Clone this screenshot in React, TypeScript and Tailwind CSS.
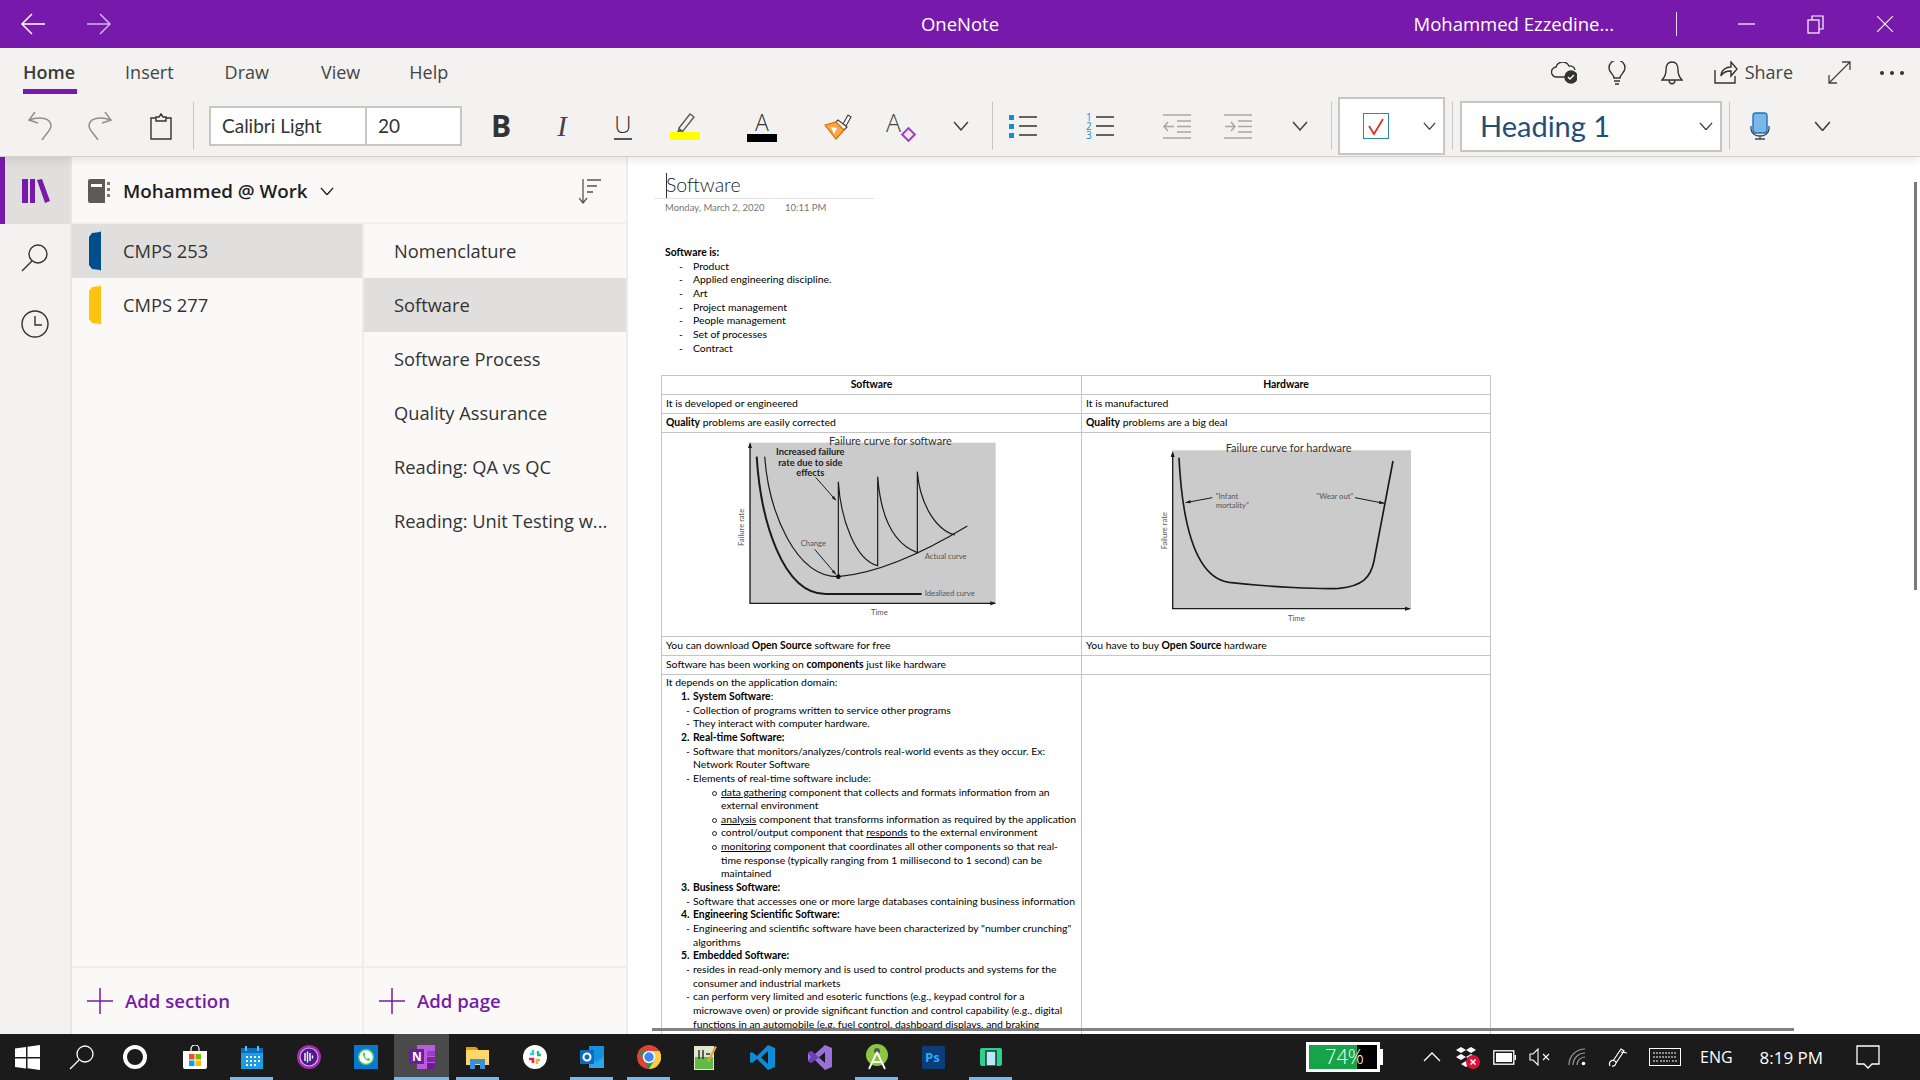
import type { ReactNode } from "react";

const ui = "[font-family:'Open_Sans',sans-serif]";
const note = "[font-family:Lato,sans-serif]";

// ── small line icons ──
function Chevron({ size = 16, color = "#444" }: { size?: number; color?: string }) {
  return (
    <svg width={size} height={size * 0.62} viewBox="0 0 16 10" fill="none" stroke={color} strokeWidth="1.6">
      <path d="M1 1l7 8 7-8" />
    </svg>
  );
}

function Undo({ flip = false }: { flip?: boolean }) {
  return (
    <svg width="26" height="28" viewBox="0 0 26 28" fill="none" stroke="#8f8f8f" strokeWidth="1.5" style={{ transform: flip ? "scaleX(-1)" : undefined }}>
      <path d="M8 0L2 8l9 3" />
      <path d="M2 8c11-4 22-2 22 6 0 4-6 9-9 14" />
    </svg>
  );
}

function ListIcon({ kind }: { kind: "bullet" | "number" }) {
  return (
    <svg width="30" height="26" viewBox="0 0 30 26" fill="none">
      <g stroke="#333" strokeWidth="1.5">
        <path d="M10 4h18M10 13h18M10 22h18" />
      </g>
      {kind === "bullet" ? (
        <g fill="#0e8fd8">
          <rect x="0" y="2" width="5" height="5" />
          <rect x="0" y="11" width="5" height="5" />
          <rect x="0" y="20" width="5" height="5" />
        </g>
      ) : (
        <g fill="#1a8ddb" fontSize="10" fontFamily="Open Sans, sans-serif">
          <text x="0" y="8">1</text>
          <text x="0" y="17">2</text>
          <text x="0" y="26">3</text>
        </g>
      )}
    </svg>
  );
}

function IndentIcon({ flip = false }: { flip?: boolean }) {
  return (
    <svg width="28" height="26" viewBox="0 0 28 26" fill="none" stroke="#a6a6a6" strokeWidth="1.5">
      <path d="M0 2h28M0 25h28M14 8h14M14 13.500h14M14 19h14" />
      {flip ? <path d="M1 13.500h10M7 9l4 4.500-4 4.500" /> : <path d="M11 13.500H1M5 9l-4 4.500 4 4.500" />}
    </svg>
  );
}

// Ribbon slot: fixed width cell which centres one tool
function Slot({ w, children }: { w: string; children: ReactNode }) {
  return <div className={`${w} flex h-full shrink-0 items-center justify-center`}>{children}</div>;
}

function Rule({ className }: { className: string }) {
  return <div className={`h-[48px] w-px shrink-0 bg-[#c8c6c4] ${className}`} />;
}

// ── title bar ──
function TitleBar() {
  return (
    <div className={`${ui} grid h-12 shrink-0 grid-cols-[1fr_auto_1fr] items-center bg-[#7719aa] text-white`}>
      <div className="flex items-center pl-[20px]">
        <svg width="26" height="24" viewBox="0 0 26 24" fill="none" stroke="#fff" strokeWidth="1.5">
          <path d="M25 12H2M12 2L2 12l10 10" />
        </svg>
        <svg className="ml-[40px]" width="26" height="24" viewBox="0 0 26 24" fill="none" stroke="#d3b3e3" strokeWidth="1.5">
          <path d="M1 12h23M14 2l10 10-10 10" />
        </svg>
      </div>
      <div className="text-[18.500px] leading-none">OneNote</div>
      <div className="flex items-center justify-end">
        <span className="text-[18.500px] leading-none">Mohammed Ezzedine...</span>
        <div className="ml-[62px] h-6 w-px bg-[#e6d5ee]" />
        <svg className="ml-[61px]" width="17" height="2" viewBox="0 0 17 2"><path d="M0 1h17" stroke="#fff" strokeWidth="1.2" /></svg>
        <svg className="ml-[52px]" width="17" height="19" viewBox="0 0 17 19" fill="none" stroke="#fff" strokeWidth="1.2">
          <rect x="1" y="5" width="11" height="13" />
          <path d="M5 5V1h11v13h-4" />
        </svg>
        <svg className="ml-[53px] mr-[27px]" width="16" height="16" viewBox="0 0 16 16" fill="none" stroke="#fff" strokeWidth="1.1">
          <path d="M0 0l16 16M16 0L0 16" />
        </svg>
      </div>
    </div>
  );
}

// ── ribbon ──
function TopTabs() {
  return (
    <div className={`${ui} flex h-12 items-center text-[#444] text-[18px]`}>
      <div className="relative ml-[23px] font-semibold text-[#3b3a39]">
        Home
        <div className="absolute left-0 top-[30px] h-[5px] w-[54px] bg-[#7719aa]" />
      </div>
      <span className="ml-[50px]">Insert</span>
      <span className="ml-[51px]">Draw</span>
      <span className="ml-[52px]">View</span>
      <span className="ml-[49px]">Help</span>
      <div className="ml-auto flex items-center pt-[1px]">
        <svg width="26" height="22" viewBox="0 0 26 22" fill="none" stroke="#333" strokeWidth="1.4">
          <path d="M17 15H6a5 5 0 0 1-1-10 7 7 0 0 1 13-1 5 5 0 0 1 6 4" />
          <circle cx="20" cy="15" r="6" fill="#333" />
          <path d="M17 15l2 2 4-4" stroke="#fff" />
        </svg>
        <svg className="ml-[31px]" width="18" height="24" viewBox="0 0 18 24" fill="none" stroke="#333" strokeWidth="1.4">
          <path d="M6 17c0-4-5-5-5-10a8 8 0 0 1 16 0c0 5-5 6-5 10zM6 20h6M7 23h4" />
        </svg>
        <svg className="ml-[35px]" width="22" height="24" viewBox="0 0 22 24" fill="none" stroke="#333" strokeWidth="1.4">
          <path d="M11 1c-5 0-6 4-6 8 0 5-1 7-4 10h20c-3-3-4-5-4-10 0-4-1-8-6-8zM8 19c0 5 6 5 6 0" />
        </svg>
        <svg className="ml-[31px]" width="24" height="23" viewBox="0 0 24 23" fill="none" stroke="#333" strokeWidth="1.4">
          <path d="M1 9v13h20v-7M7 15c0-6 5-9 10-9V1l6 7-6 7V10c-4 0-8 1-10 5z" />
        </svg>
        <span className="ml-[7px] text-[#444]">Share</span>
        <svg className="ml-[35px]" width="23" height="23" viewBox="0 0 23 23" fill="none" stroke="#444" strokeWidth="1.3">
          <path d="M1 22L22 1M14 1h8v8M1 14v8h8" />
        </svg>
        <div className="ml-[29px] mr-[16px] flex gap-[6px]">
          <div className="h-1 w-1 rounded-full bg-[#333]" />
          <div className="h-1 w-1 rounded-full bg-[#333]" />
          <div className="h-1 w-1 rounded-full bg-[#333]" />
        </div>
      </div>
    </div>
  );
}

function ToolRow() {
  return (
    <div className={`${ui} flex h-[60px] items-center pl-[10px]`}>
      <Slot w="w-[60px]"><Undo /></Slot>
      <Slot w="w-[60px]"><Undo flip /></Slot>
      <Slot w="w-[62px]">
        <svg width="24" height="27" viewBox="0 0 24 27" fill="none" stroke="#333" strokeWidth="1.4">
          <path d="M7 5H2v21h20V5h-5" />
          <path d="M7 8V4h3l2-3 2 3h3v4z" />
        </svg>
      </Slot>
      <Rule className="ml-px" />
      <div className="ml-[15px] flex h-[40px] w-[253px] shrink-0 border-2 border-[#c8c6c4] bg-white text-[#333] text-[19px]">
        <div className={`${note} flex w-[156px] items-center border-r-2 border-[#c8c6c4] pl-[11px]`}>Calibri Light</div>
        <div className={`${note} flex flex-1 items-center pl-[11px]`}>20</div>
      </div>
      <Slot w="w-[78px]"><span className="text-[30px] font-bold leading-none text-[#333]">B</span></Slot>
      <Slot w="w-[44px]"><span className="[font-family:'Liberation_Serif',serif] text-[29px] italic leading-none text-[#444]">I</span></Slot>
      <Slot w="w-[78px]">
        <div className="flex flex-col items-center">
          <span className="text-[24px] font-light leading-[24px] text-[#333]">U</span>
          <div className="mt-[2px] h-[2px] w-[18px] bg-[#555]" />
        </div>
      </Slot>
      <Slot w="w-[46px]">
        <svg width="30" height="28" viewBox="0 0 30 28" fill="none">
          <path d="M9 16L20 2l4 3-11 14-5 1z" stroke="#555" strokeWidth="1.3" />
          <path d="M9 16l-2 5h5l2-2z" fill="#666" />
          <rect x="0" y="20" width="30" height="8" fill="#ffff00" />
        </svg>
      </Slot>
      <Slot w="w-[108px]">
        <div className="flex w-[30px] flex-col items-center">
          <span className="text-[23px] font-light leading-[22px] text-[#333]">A</span>
          <div className="mt-[1px] h-[8px] w-[30px] bg-black" />
        </div>
      </Slot>
      <Slot w="w-[44px]">
        <svg width="28" height="28" viewBox="0 0 28 28" fill="none">
          <path d="M19 12l5-9 3 2-5 9z" fill="#fff" stroke="#444" strokeWidth="1.2" />
          <path d="M14 8l9 7-3 3-9-7z" fill="#fff" stroke="#444" strokeWidth="1.2" />
          <path d="M1 13l11-3 8 8-8 9z" fill="#f7a745" stroke="#d96f0b" strokeWidth="1.2" />
          <path d="M7 15l6 1-3 6z" fill="#fff" />
        </svg>
      </Slot>
      <Slot w="w-[80px]">
        <div className="relative h-[30px] w-[28px]">
          <span className="absolute left-0 top-[-3px] text-[25px] font-light leading-[28px] text-[#444]">A</span>
          <div className="absolute bottom-[1px] right-0 h-[11px] w-[11px] rotate-45 border-2 border-[#a23cc0] bg-[#f3e3f8]" />
        </div>
      </Slot>
      <Slot w="w-[42px]"><Chevron /></Slot>
      <Rule className="ml-[10px]" />
      <Slot w="w-[62px]"><ListIcon kind="bullet" /></Slot>
      <Slot w="w-[92px]"><ListIcon kind="number" /></Slot>
      <Slot w="w-[60px]"><IndentIcon /></Slot>
      <Slot w="w-[62px]"><IndentIcon flip /></Slot>
      <Slot w="w-[62px]"><Chevron /></Slot>
      <Rule className="" />
      <div className="ml-[6px] flex h-[58px] w-[107px] shrink-0 items-center border-2 border-[#c8c6c4] bg-white pl-[23px]">
        <svg width="26" height="26" viewBox="0 0 26 26" fill="none">
          <rect x="0.500" y="0.500" width="25" height="25" stroke="#2b88a8" />
          <path d="M6 13l5 8 9-15" stroke="#e0301e" strokeWidth="1.8" />
        </svg>
        <div className="ml-[34px]"><Chevron size={13} /></div>
      </div>
      <Rule className="ml-[7px]" />
      <div className={`${note} ml-[7px] flex h-[51px] w-[262px] shrink-0 items-center border-2 border-[#c8c6c4] bg-white pl-[18px] text-[29px] text-[#1f4e79]`}>
        Heading 1
        <div className="ml-auto mr-[7px]"><Chevron size={14} /></div>
      </div>
      <Rule className="ml-[7px]" />
      <Slot w="w-[60px]">
        <svg width="20" height="28" viewBox="0 0 20 28" fill="none">
          <rect x="3" y="1" width="14" height="20" rx="3" fill="#7db7e8" stroke="#1a73c7" strokeWidth="1.4" />
          <path d="M1 14v3a9 7 0 0 0 18 0v-3M10 24v3M5 27h10" stroke="#444" strokeWidth="1.3" />
        </svg>
      </Slot>
      <Slot w="w-[64px]"><Chevron size={17} /></Slot>
    </div>
  );
}

// ── left rail and lists ──
function SideRail() {
  return (
    <div className="flex w-[72px] shrink-0 flex-col items-center border-r-2 border-[#e8e6e4] bg-[#f3f2f1]">
      <div className="flex h-[67px] w-full items-center justify-center border-l-[5px] border-[#7719aa] bg-[#e1dfdd] pr-[4px]">
        <svg width="28" height="24" viewBox="0 0 28 24" fill="#7719aa">
          <rect x="0" y="0" width="6" height="24" />
          <rect x="8" y="0" width="5" height="24" />
          <path d="M15 1l5-1 8 22-5 2z" />
        </svg>
      </div>
      <svg className="mt-[20px]" width="28" height="28" viewBox="0 0 28 28" fill="none" stroke="#333" strokeWidth="1.4">
        <circle cx="17" cy="10" r="9" />
        <path d="M11 17L1 27" />
      </svg>
      <svg className="mt-[38px]" width="28" height="28" viewBox="0 0 28 28" fill="none" stroke="#333" strokeWidth="1.4">
        <circle cx="14" cy="14" r="13" />
        <path d="M14 6v9h7" />
      </svg>
    </div>
  );
}

function SectionTab({ color }: { color: string }) {
  return (
    <svg width="13" height="40" viewBox="0 0 13 40" fill={color}>
      <path d="M12 0v40l-1-1-8-1-3-4V6l3-4 8-1z" />
    </svg>
  );
}

const pages = ["Nomenclature", "Software", "Software Process", "Quality Assurance", "Reading: QA vs QC", "Reading: Unit Testing w..."];

function Panels() {
  return (
    <div className={`${ui} flex w-[556px] shrink-0 flex-col border-r-2 border-[#eeedeb] bg-[#faf9f8] text-[18.300px] text-[#333]`}>
      <div className="flex h-[67px] shrink-0 items-center border-b-2 border-[#f0efed] pl-[16px] pt-[3px]">
        <svg width="23" height="24" viewBox="0 0 23 24">
          <path d="M0 2a2 2 0 0 1 2-2h15v24H2a2 2 0 0 1-2-2z" fill="#5e5a56" />
          <rect x="3" y="5" width="11" height="3" fill="#fff" />
          <path d="M19 3h3v3h-3zM19 9h3v3h-3zM19 15h3v3h-3z" fill="#777" />
        </svg>
        <span className="ml-[12px] text-[18.800px] font-semibold text-[#201f1e]">Mohammed @ Work</span>
        <div className="ml-[12px]"><Chevron size={14} color="#222" /></div>
        <svg className="ml-auto mr-[25px]" width="22" height="26" viewBox="0 0 22 26" fill="none" stroke="#555" strokeWidth="1.3">
          <path d="M4 1v23M0 20l4 5 4-5M8 2h14M8 8h10M8 14h6" />
        </svg>
      </div>
      <div className="flex min-h-0 flex-1">
        <div className="flex w-[292px] shrink-0 flex-col border-r-2 border-[#eeedeb]">
          <div className="flex h-[54px] items-center bg-[#e1dfdd] pl-[17px]">
            <SectionTab color="#004e8c" />
            <span className="ml-[21px]">CMPS 253</span>
          </div>
          <div className="flex h-[54px] items-center pl-[17px]">
            <SectionTab color="#ffc20e" />
            <span className="ml-[21px]">CMPS 277</span>
          </div>
          <AddRow label="Add section" />
        </div>
        <div className="flex flex-1 flex-col">
          {pages.map((p) => (
            <div key={p} className={`flex h-[54px] shrink-0 items-center pl-[30px] ${p === "Software" ? "bg-[#e1dfdd]" : ""}`}>
              {p}
            </div>
          ))}
          <AddRow label="Add page" />
        </div>
      </div>
    </div>
  );
}

function AddRow({ label }: { label: string }) {
  return (
    <div className="mt-auto flex h-[68px] items-center border-t-2 border-[#eeedeb] pl-[15px] text-[18.600px] font-semibold text-[#7719aa]">
      <svg width="26" height="26" viewBox="0 0 26 26" stroke="#7719aa" strokeWidth="1.5">
        <path d="M13 0v26M0 13h26" />
      </svg>
      <span className="ml-[12px]">{label}</span>
    </div>
  );
}

// ── failure curve pictures: coordinates follow the pasted image ──
function SoftwareCurve() {
  return (
    <svg width="420" height="203" viewBox="39 39 1260 609" className="block" fontFamily="Lato, sans-serif">
      <rect x="303" y="68" width="737" height="482" fill="#cbcbcb" />
      <g fill="none" stroke="#1a1a1a">
        <path d="M303 72v478h735" strokeWidth="4" />
        <path d="M323 110c12 190 77 412 207 412h288" strokeWidth="6" />
        <path d="M347 110c13 170 93 360 221 360 112-10 252-70 387-152" strokeWidth="3.500" />
        <path d="M568 470V185c7 115 52 235 118 252V170c9 120 44 200 119 228V155c7 95 55 175 113 190" strokeWidth="3.500" />
        <path d="M497 388l63 74M500 172l60 68" strokeWidth="3" />
      </g>
      <path d="M303 66l-6 18h12zM1042 550l-18-6v12zM562 464l-14-8 7-6zM562 242l-14-8 7-6z" fill="#1a1a1a" />
      <circle cx="568" cy="470" r="7" fill="#111" />
      <text x="540" y="74" fontSize="33" fill="#333">Failure curve for software</text>
      <g fontSize="28" fontWeight="700" fill="#222" textAnchor="middle">
        <text x="484" y="105">Increased failure</text>
        <text x="484" y="137">rate due to side</text>
        <text x="484" y="168">effects</text>
      </g>
      <g fontSize="23" fill="#555">
        <text x="455" y="377">Change</text>
        <text x="827" y="418">Actual curve</text>
        <text x="827" y="529">Idealized curve</text>
        <text x="666" y="585">Time</text>
        <text transform="translate(286 378) rotate(-90)">Failure rate</text>
      </g>
    </svg>
  );
}

function HardwareCurve() {
  return (
    <svg width="407" height="201" viewBox="39 189 1221 603" className="block" fontFamily="Lato, sans-serif">
      <rect x="310" y="238" width="716" height="475" fill="#cbcbcb" />
      <g fill="none" stroke="#1a1a1a">
        <path d="M311 246v467h712" strokeWidth="4" />
        <path d="M330 260c10 200 50 360 150 374 120 14 280 21 330 18 70-7 95-32 105-82l57-300" strokeWidth="5" />
        <path d="M430 380l-80 15M858 380l87 17" strokeWidth="3" />
      </g>
      <path d="M311 240l-6 18h12zM1026 713l-18-6v12zM348 395l16-8 1 10zM947 397l-16-8-1 10z" fill="#1a1a1a" />
      <text x="470" y="244" fontSize="33" fill="#333">Failure curve for hardware</text>
      <g fontSize="23" fill="#555">
        <text x="440" y="384">"Infant</text>
        <text x="440" y="412">mortality"</text>
        <text x="742" y="385">"Wear out"</text>
        <text x="657" y="749">Time</text>
        <text transform="translate(294 535) rotate(-90)">Failure rate</text>
      </g>
    </svg>
  );
}

// ── note page ──
function Num({ n, children }: { n: number; children: ReactNode }) {
  return (
    <div className="relative ml-[27px] font-bold">
      <span className="absolute left-[-12px]">{n}.</span>
      {children}
    </div>
  );
}

function Dash({ children }: { children: ReactNode }) {
  return (
    <div className="relative ml-[27px]">
      <span className="absolute left-[-7px]">-</span>
      {children}
    </div>
  );
}

function Sub({ children }: { children: ReactNode }) {
  return (
    <div className="relative ml-[55px]">
      <span className="absolute left-[-9px] top-[5px] h-[5px] w-[5px] rounded-full border border-[#222]" />
      {children}
    </div>
  );
}

const tdClass = "h-[19px] border border-[#c4c4c4] px-[4px] align-middle";

function Note() {
  return (
    <div className={`${note} relative min-w-0 flex-1 overflow-hidden bg-white text-[10.400px] leading-[13.650px] text-black`}>
      <div className="ml-[27px] mt-[16px] w-[219px]">
        <div className="relative h-[26px] border-b border-[#e1dfdd] pl-[11px] text-[19.500px] font-light leading-[24px] text-[#222]">
          <div className="absolute left-[11px] top-0 h-[25px] w-px bg-[#333]" />
          Software
        </div>
        <div className="flex h-[18px] items-center pl-[10px] text-[9.500px] text-[#767676]">
          <span className="w-[120px]">Monday, March 2, 2020</span>
          <span>10:11 PM</span>
        </div>
      </div>
      <div className="ml-[37px] mt-[29px]">
        <div className="font-bold">Software is:</div>
        {["Product", "Applied engineering discipline.", "Art", "Project management", "People management", "Set of processes", "Contract"].map((t) => (
          <div key={t} className="flex">
            <span className="ml-[14px] w-[14px]">-</span>
            {t}
          </div>
        ))}
      </div>
      <table className="ml-[33px] mt-[20px] w-[829px] table-fixed border-collapse">
        <colgroup>
          <col className="w-[420px]" />
          <col className="w-[409px]" />
        </colgroup>
        <tbody>
          <tr>
            <td className={`${tdClass} text-center font-bold`}>Software</td>
            <td className={`${tdClass} text-center font-bold`}>Hardware</td>
          </tr>
          <tr>
            <td className={tdClass}>It is developed or engineered</td>
            <td className={tdClass}>It is manufactured</td>
          </tr>
          <tr>
            <td className={tdClass}><b>Quality</b> problems are easily corrected</td>
            <td className={tdClass}><b>Quality</b> problems are a big deal</td>
          </tr>
          <tr>
            <td className="h-[203px] border border-[#c4c4c4] p-0"><SoftwareCurve /></td>
            <td className="h-[203px] border border-[#c4c4c4] p-0"><HardwareCurve /></td>
          </tr>
          <tr>
            <td className={tdClass}>You can download <b>Open Source</b> software for free</td>
            <td className={tdClass}>You have to buy <b>Open Source</b> hardware</td>
          </tr>
          <tr>
            <td className={tdClass}>Software has been working on <b>components</b> just like hardware</td>
            <td className={tdClass}></td>
          </tr>
          <tr>
            <td className="border border-[#c4c4c4] px-[4px] pt-[1px] align-top">
              <div>It depends on the application domain:</div>
              <Num n={1}>System Software<span className="font-normal">:</span></Num>
              <Dash>Collection of programs written to service other programs</Dash>
              <Dash>They interact with computer hardware.</Dash>
              <Num n={2}>Real-time Software:</Num>
              <Dash>Software that monitors/analyzes/controls real-world events as they occur. Ex:<br />Network Router Software</Dash>
              <Dash>Elements of real-time software include:</Dash>
              <Sub><u>data gathering</u> component that collects and formats information from an<br />external environment</Sub>
              <Sub><u>analysis</u> component that transforms information as required by the application</Sub>
              <Sub>control/output component that <u>responds</u> to the external environment</Sub>
              <Sub><u>monitoring</u> component that coordinates all other components so that real-<br />time response (typically ranging from 1 millisecond to 1 second) can be<br />maintained</Sub>
              <Num n={3}>Business Software:</Num>
              <Dash>Software that accesses one or more large databases containing business information</Dash>
              <Num n={4}>Engineering Scientific Software:</Num>
              <Dash>Engineering and scientific software have been characterized by "number crunching"<br />algorithms</Dash>
              <Num n={5}>Embedded Software:</Num>
              <Dash>resides in read-only memory and is used to control products and systems for the<br />consumer and industrial markets</Dash>
              <Dash>can perform very limited and esoteric functions (e.g., keypad control for a<br />microwave oven) or provide significant function and control capability (e.g., digital<br />functions in an automobile (e.g. fuel control, dashboard displays, and braking<br />systems)</Dash>
            </td>
            <td className="border border-[#c4c4c4]"></td>
          </tr>
        </tbody>
      </table>
      {/* overlay scrollbars */}
      <div className="absolute left-[1286px] top-[25px] h-[408px] w-[3px] bg-[#7a7a7a]" />
      <div className="absolute bottom-[3px] left-[24px] h-[3px] w-[1142px] bg-[#808080]" />
    </div>
  );
}

// ── taskbar ──
function TaskIcon({ w = "w-[57px]", on, active, children }: { w?: string; on?: boolean; active?: boolean; children: ReactNode }) {
  return (
    <div className={`${w} relative flex h-full shrink-0 items-center justify-center ${active ? "bg-[#4a4a4a]" : ""}`}>
      {children}
      {on && <div className={`absolute bottom-0 h-[3px] bg-[#76b9ed] ${active ? "inset-x-0" : "inset-x-[7px]"}`} />}
    </div>
  );
}

function Taskbar() {
  return (
    <div className={`${ui} flex h-[46px] shrink-0 items-center bg-[#1b1b1b] text-white`}>
      <TaskIcon w="w-[54px]">
        <svg width="25" height="25" viewBox="0 0 25 25" fill="#fff">
          <path d="M0 3.500l11-1.500v10H0zM12.500 1.800L25 0v12H12.500zM0 13.500h11v10L0 22zM12.500 13.500H25V25l-12.500-1.800z" />
        </svg>
      </TaskIcon>
      <TaskIcon w="w-[54px]">
        <svg width="25" height="25" viewBox="0 0 25 25" fill="none" stroke="#fff" strokeWidth="1.3">
          <circle cx="16" cy="9" r="8" />
          <path d="M10 15L1 24" />
        </svg>
      </TaskIcon>
      <TaskIcon w="w-[54px]">
        <div className="h-[24px] w-[24px] rounded-full border-[4px] border-white" />
      </TaskIcon>
      <div className="w-[4px] shrink-0" />
      <TaskIcon>
        <svg width="24" height="24" viewBox="0 0 24 24">
          <path d="M8 6V4a4 4 0 0 1 8 0v2" fill="none" stroke="#fff" strokeWidth="1.2" />
          <path d="M0 6h24v16a2 2 0 0 1-2 2H2a2 2 0 0 1-2-2z" fill="#fff" />
          <rect x="6" y="9" width="5.500" height="5.500" fill="#f25022" />
          <rect x="12.500" y="9" width="5.500" height="5.500" fill="#7fba00" />
          <rect x="6" y="15.500" width="5.500" height="5.500" fill="#00a4ef" />
          <rect x="12.500" y="15.500" width="5.500" height="5.500" fill="#ffb900" />
        </svg>
      </TaskIcon>
      <TaskIcon on>
        <svg width="22" height="23" viewBox="0 0 22 23">
          <rect x="0" y="2" width="22" height="21" fill="#1b9de2" />
          <rect x="0" y="2" width="22" height="5" fill="#0f6cbd" />
          <path d="M4 0h2v5H4zM16 0h2v5h-2z" fill="#5cc1f0" />
          <path d="M5 10h2v2H5zM9 10h2v2H9zM13 10h2v2h-2zM17 10h2v2h-2zM5 14h2v2H5zM9 14h2v2H9zM13 14h2v2h-2zM17 14h2v2h-2zM5 18h2v2H5zM9 18h2v2H9zM13 18h2v2h-2z" fill="#fff" />
        </svg>
      </TaskIcon>
      <TaskIcon>
        <svg width="24" height="24" viewBox="0 0 24 24">
          <circle cx="12" cy="12" r="12" fill="#a42bb0" />
          <circle cx="12" cy="12" r="9" fill="#4a1b8c" stroke="#e0a8ec" strokeWidth="1.2" />
          <path d="M8 8v8M10.500 6.500v11M13 8v8M15.500 10.500v3" stroke="#fff" strokeWidth="1.4" />
        </svg>
      </TaskIcon>
      <TaskIcon>
        <svg width="24" height="24" viewBox="0 0 24 24">
          <rect width="24" height="24" fill="#0b76d1" />
          <circle cx="12" cy="12" r="7.500" fill="#fff" stroke="#4ac959" strokeWidth="1.500" />
          <path d="M9 8c-1 3 3 8 6 8l1.500-2-2.500-1-1 1c-1-.5-2-2-2.500-3l1-1-1-2.500z" fill="#4ac959" />
        </svg>
      </TaskIcon>
      <TaskIcon w="w-[55px]" on active>
        <svg width="26" height="24" viewBox="0 0 26 24">
          <rect x="8" y="0" width="18" height="24" fill="#b55ddc" />
          <rect x="18" y="6" width="8" height="5" fill="#9a3dc6" />
          <rect x="18" y="12" width="8" height="5" fill="#83279f" />
          <rect x="18" y="18" width="8" height="6" fill="#6d1c93" />
          <rect x="0" y="4" width="15" height="15" fill="#6f1da0" />
          <text x="3" y="16" fontSize="12" fontWeight="700" fill="#fff" fontFamily="Open Sans, sans-serif">N</text>
        </svg>
      </TaskIcon>
      <TaskIcon on>
        <svg width="23" height="24" viewBox="0 0 23 24">
          <path d="M0 2h10l2 2v3H0z" fill="#e3a008" />
          <rect x="0" y="5" width="23" height="15" fill="#fcd669" />
          <path d="M4 14h15v10h-5v-5H9v5H4z" fill="#3b8fd9" />
        </svg>
      </TaskIcon>
      <TaskIcon>
        <svg width="24" height="24" viewBox="0 0 24 24">
          <circle cx="12" cy="12" r="12" fill="#fff" />
          <path d="M10 5v4H7" stroke="#36c5f0" strokeWidth="2.500" fill="none" />
          <path d="M14 10h4M15 6v3" stroke="#2eb67d" strokeWidth="2.500" fill="none" />
          <path d="M14 19v-4h3" stroke="#ecb22e" strokeWidth="2.500" fill="none" />
          <path d="M6 14h4v4" stroke="#e01e5a" strokeWidth="2.500" fill="none" />
        </svg>
      </TaskIcon>
      <TaskIcon on>
        <svg width="24" height="24" viewBox="0 0 24 24">
          <path d="M9 1h15v22H9z" fill="#1490df" />
          <path d="M9 12l7 5 8-5v11H9z" fill="#28a8ea" />
          <rect x="0" y="5" width="14" height="14" fill="#0f6cbd" />
          <circle cx="7" cy="12" r="3.500" fill="none" stroke="#fff" strokeWidth="2" />
        </svg>
      </TaskIcon>
      <TaskIcon on>
        <svg width="24" height="24" viewBox="0 0 24 24">
          <circle cx="12" cy="12" r="12" fill="#db4437" />
          <path d="M2 6l6 10 4 8a12 12 0 0 0 9-18z" fill="#0f9d58" />
          <path d="M12 6h10.500a12 12 0 0 1-10.500 18l6-10z" fill="#ffcd40" />
          <circle cx="12" cy="12" r="5.500" fill="#4285f4" stroke="#fff" strokeWidth="1.500" />
        </svg>
      </TaskIcon>
      <TaskIcon>
        <svg width="23" height="25" viewBox="0 0 23 25">
          <rect x="0" y="1" width="20" height="24" fill="#dfe8c8" />
          <rect x="1" y="12" width="18" height="12" fill="#62bb46" />
          <path d="M5 5v9M9 5v9M12 9h4" stroke="#333" strokeWidth="1.500" />
          <path d="M21 1l2 1-8 15-2-1z" fill="#e8a33d" />
        </svg>
      </TaskIcon>
      <TaskIcon>
        <svg width="25" height="25" viewBox="0 0 25 25">
          <path d="M18 0l7 3v19l-7 3L7 14l-5 4-2-1V8l2-1 5 4z" fill="#0f8ad6" />
          <path d="M18 6l-7 6.500 7 6.500z" fill="#1b1b1b" />
        </svg>
      </TaskIcon>
      <TaskIcon>
        <svg width="24" height="25" viewBox="0 0 24 25">
          <path d="M17 0l7 3v19l-7 3L7 15l-4 3-3-2V8l3-2 4 3z" fill="#9b6fdc" />
          <path d="M17 7l-6 5.500 6 5.500z" fill="#1b1b1b" />
          <path d="M0 8l3-2 4 3 4 3.500L7 15l-4 3-3-2 3-4z" fill="#6c3fb5" />
        </svg>
      </TaskIcon>
      <TaskIcon on>
        <svg width="22" height="26" viewBox="0 0 22 26">
          <circle cx="11" cy="11" r="11" fill="#8cc63f" />
          <circle cx="11" cy="7" r="3" fill="#555" />
          <path d="M11 8L3 25M11 8l8 17M6 18h10" stroke="#fff" strokeWidth="1.800" fill="none" />
        </svg>
      </TaskIcon>
      <TaskIcon>
        <svg width="23" height="23" viewBox="0 0 23 23">
          <rect width="23" height="23" rx="1" fill="#0a3d7a" />
          <text x="3" y="16" fontSize="13" fontWeight="700" fill="#31a8ff" fontFamily="Open Sans, sans-serif">Ps</text>
        </svg>
      </TaskIcon>
      <TaskIcon on>
        <svg width="22" height="18" viewBox="0 0 22 18">
          <rect width="22" height="18" rx="2" fill="#2fd08f" />
          <rect x="6" y="3" width="10" height="15" fill="#bfe6f5" stroke="#0d3d33" strokeWidth="1.500" />
        </svg>
      </TaskIcon>

      {/* tray */}
      <div className="ml-[287px] flex h-[30px] w-[74px] items-stretch border-[3px] border-white">
        <div className="relative flex w-[48px] items-center justify-end bg-[#16a34a]">
          <span className="absolute left-[16px] text-[20px] font-light leading-none">74%</span>
        </div>
        <div className="flex-1 bg-black" />
      </div>
      <div className="h-[16px] w-[3px] bg-white" />
      <svg className="ml-[40px]" width="18" height="10" viewBox="0 0 18 10" fill="none" stroke="#fff" strokeWidth="1.3"><path d="M1 9l8-8 8 8" /></svg>
      <svg className="ml-[15px]" width="24" height="24" viewBox="0 0 24 24">
        <path d="M5 2l5 3-5 3-5-3zM15 2l5 3-5 3-5-3zM5 9l5 3-5 3-5-3zM15 9l5 3-5 3-5-3zM10 16l5 3-5 3-5-3z" fill="#fff" />
        <circle cx="17" cy="17" r="7" fill="#d91438" />
        <path d="M14.500 14.500l5 5M19.500 14.500l-5 5" stroke="#fff" strokeWidth="1.500" />
      </svg>
      <svg className="ml-[13px]" width="23" height="15" viewBox="0 0 23 15" fill="none">
        <rect x="0.800" y="0.800" width="20" height="13.400" stroke="#fff" strokeWidth="1.300" />
        <rect x="3" y="3" width="16" height="9" fill="#fff" />
        <rect x="21.500" y="5" width="1.500" height="5" fill="#fff" />
      </svg>
      <svg className="ml-[13px]" width="21" height="18" viewBox="0 0 21 18" fill="none" stroke="#fff" strokeWidth="1.100">
        <path d="M1 6h3l5-5v16l-5-5H1zM14 6l6 6M20 6l-6 6" />
      </svg>
      <svg className="ml-[18px]" width="18" height="18" viewBox="0 0 18 18" fill="none" stroke="#999" strokeWidth="1.200">
        <path d="M1 17A16 16 0 0 1 17 1M5 17A12 12 0 0 1 17 5M9 17a8 8 0 0 1 8-8" />
        <circle cx="15.500" cy="15.500" r="1.800" fill="#fff" stroke="none" />
      </svg>
      <svg className="ml-[22px]" width="20" height="20" viewBox="0 0 20 20" fill="none" stroke="#fff" strokeWidth="1.200">
        <path d="M2 19c-2-4 2-7 5-5s-1 6-3 5M5 14L13 2l3 2-8 12M13 5l6 1" />
      </svg>
      <svg className="ml-[21px]" width="32" height="18" viewBox="0 0 32 18" fill="none" stroke="#fff">
        <rect x="0.500" y="0.500" width="31" height="17" />
        <path d="M4 5h24M4 9h24M4 13h5M11 13h10M23 13h5" strokeDasharray="2 1" />
      </svg>
      <span className="ml-[19px] text-[16px] leading-none">ENG</span>
      <span className="ml-[27px] text-[17px] leading-none">8:19 PM</span>
      <svg className="ml-[33px]" width="24" height="24" viewBox="0 0 24 24" fill="none" stroke="#fff" strokeWidth="1.300">
        <path d="M1 1h22v18h-7l-4 4-4-4H1z" />
      </svg>
    </div>
  );
}

export default function App() {
  return (
    <div className="flex h-screen w-full flex-col overflow-hidden bg-white">
      <TitleBar />
      <div className="relative z-10 h-[109px] shrink-0 border-b border-[#d2d0ce] bg-[#f3f2f1] shadow-[0_4px_8px_rgba(0,0,0,0.08)]">
        <TopTabs />
        <ToolRow />
      </div>
      <div className="flex min-h-0 flex-1">
        <SideRail />
        <Panels />
        <Note />
      </div>
      <Taskbar />
    </div>
  );
}
